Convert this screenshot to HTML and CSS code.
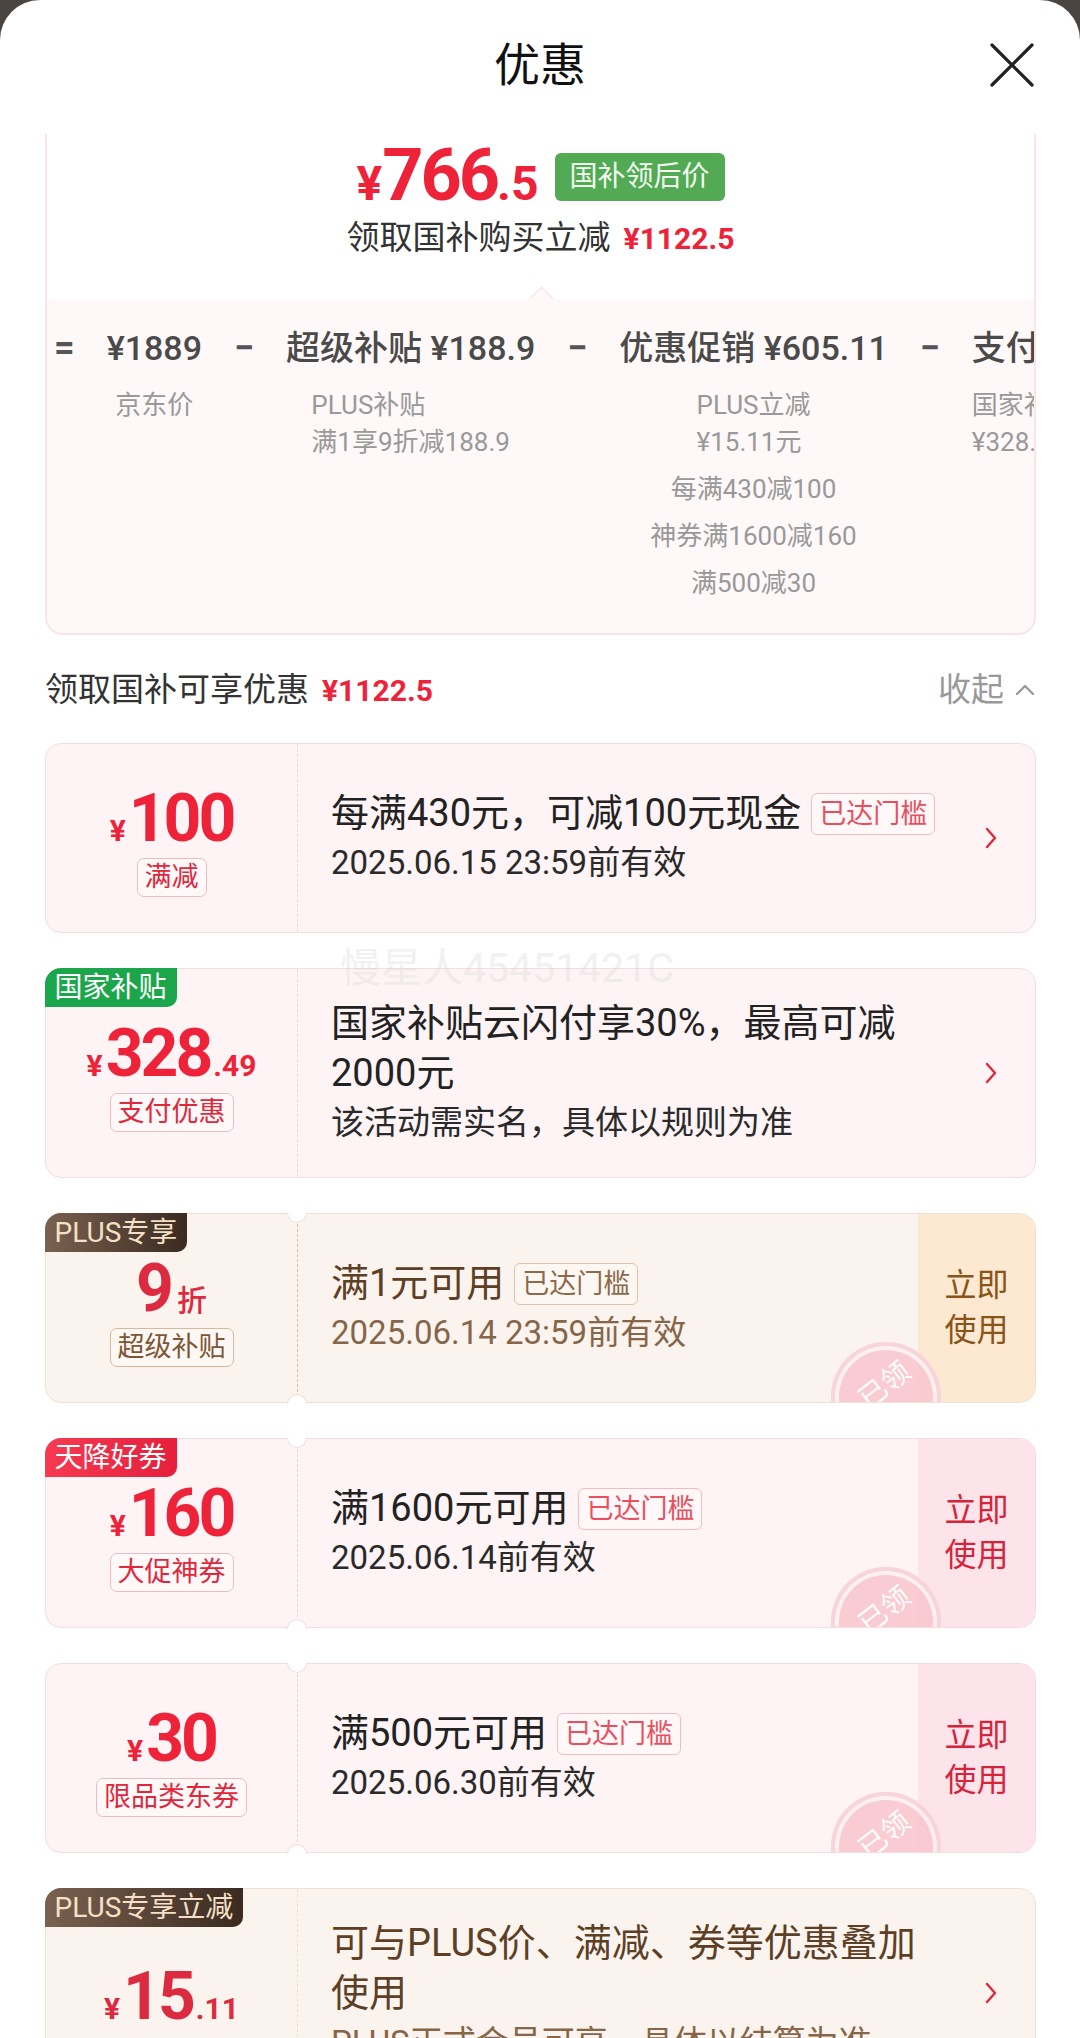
FILE: index.html
```html
<!DOCTYPE html>
<html lang="zh-CN">
<head>
<meta charset="utf-8">
<title>优惠</title>
<link rel="stylesheet" href="styles.css">
</head>
<body>
<div class="sheet">
  <header class="hd">
    <span></span>
    <h1 class="hd-title">优惠</h1>
    <span class="hd-close"><svg width="46" height="46" viewBox="0 0 46 46"><path d="M3 3L43 43M43 3L3 43" stroke="#222" stroke-width="3.2" fill="none" stroke-linecap="round"/></svg></span>
  </header>

  <section class="summary">
    <div class="sum-top">
      <div class="sum-price">
        <span class="pr"><span class="pr-y">¥</span><span class="pr-i">766</span><span class="pr-d">.5</span></span>
        <span class="gtag">国补领后价</span>
      </div>
      <div class="sum-sub">领取国补购买立减<span class="red-b">¥1122.5</span></div>
    </div>
    <div class="sum-bot">
      <span class="arrow"></span>
      <div class="formula">
        <span class="op">=</span>
        <div class="fcol">
          <div class="fval">¥1889</div>
          <div class="fgroup">京东价</div>
        </div>
        <span class="op">−</span>
        <div class="fcol">
          <div class="fval">超级补贴 ¥188.9</div>
          <div class="fgroup">PLUS补贴<br>满1享9折减188.9</div>
        </div>
        <span class="op">−</span>
        <div class="fcol">
          <div class="fval">优惠促销 ¥605.11</div>
          <div class="fgroup">PLUS立减<br>¥15.11元</div>
          <div class="fitem">每满430减100</div>
          <div class="fitem">神券满1600减160</div>
          <div class="fitem">满500减30</div>
        </div>
        <span class="op">−</span>
        <div class="fcol fcol-start">
          <div class="fval">支付优惠 ¥328.49</div>
          <div class="fgroup">国家补贴<br>¥328.49</div>
        </div>
      </div>
    </div>
  </section>

  <div class="sec-hd">
    <div class="sec-title">领取国补可享优惠<span class="red-b">¥1122.5</span></div>
    <div class="sec-fold">收起<svg width="22" height="14" viewBox="0 0 22 14"><path d="M3 11L11 3L19 11" stroke="#9a9a9a" stroke-width="2.4" fill="none" stroke-linecap="round" stroke-linejoin="round"/></svg></div>
  </div>

  <div class="cards">
    <!-- card 1 -->
    <div class="card t-pink">
      <div class="c-left">
        <div class="amt"><span class="amt-y">¥</span><span class="amt-i">100</span></div>
        <span class="ltag">满减</span>
      </div>
      <div class="c-mid">
        <div class="c-title">每满430元，可减100元现金<span class="mtag">已达门槛</span></div>
        <div class="c-date">2025.06.15 23:59前有效</div>
      </div>
      <div class="c-go"><svg width="14" height="24" viewBox="0 0 14 24"><path d="M3 3L11 12L3 21" stroke="#e0283c" stroke-width="2.4" fill="none" stroke-linecap="round" stroke-linejoin="round"/></svg></div>
    </div>

    <!-- card 2 -->
    <div class="card t-pink">
      <span class="ctag ctag-green">国家补贴</span>
      <div class="c-left">
        <div class="amt"><span class="amt-y">¥</span><span class="amt-i">328</span><span class="amt-d">.49</span></div>
        <span class="ltag">支付优惠</span>
      </div>
      <div class="c-mid">
        <div class="c-title">国家补贴云闪付享30%，最高可减2000元</div>
        <div class="c-date">该活动需实名，具体以规则为准</div>
      </div>
      <div class="c-go"><svg width="14" height="24" viewBox="0 0 14 24"><path d="M3 3L11 12L3 21" stroke="#e0283c" stroke-width="2.4" fill="none" stroke-linecap="round" stroke-linejoin="round"/></svg></div>
    </div>

    <!-- card 3 -->
    <div class="card t-beige">
      <span class="ctag ctag-plus">PLUS专享</span>
      <div class="c-left c-dash">
        <div class="amt"><span class="amt-i">9</span><span class="amt-u">折</span></div>
        <span class="ltag">超级补贴</span>
      </div>
      <div class="c-mid">
        <div class="c-title">满1元可用<span class="mtag">已达门槛</span></div>
        <div class="c-date">2025.06.14 23:59前有效</div>
      </div>
      <div class="c-btn">立即<br>使用</div>
      <span class="notch notch-top"></span>
      <span class="notch notch-bot"></span>
      <div class="clip"><div class="stamp"><span>已领</span></div></div>
    </div>

    <!-- card 4 -->
    <div class="card t-coupon">
      <span class="ctag ctag-red">天降好券</span>
      <div class="c-left c-dash">
        <div class="amt"><span class="amt-y">¥</span><span class="amt-i">160</span></div>
        <span class="ltag">大促神券</span>
      </div>
      <div class="c-mid">
        <div class="c-title">满1600元可用<span class="mtag">已达门槛</span></div>
        <div class="c-date">2025.06.14前有效</div>
      </div>
      <div class="c-btn">立即<br>使用</div>
      <span class="notch notch-top"></span>
      <span class="notch notch-bot"></span>
      <div class="clip"><div class="stamp"><span>已领</span></div></div>
    </div>

    <!-- card 5 -->
    <div class="card t-coupon">
      <div class="c-left c-dash">
        <div class="amt"><span class="amt-y">¥</span><span class="amt-i">30</span></div>
        <span class="ltag">限品类东券</span>
      </div>
      <div class="c-mid">
        <div class="c-title">满500元可用<span class="mtag">已达门槛</span></div>
        <div class="c-date">2025.06.30前有效</div>
      </div>
      <div class="c-btn">立即<br>使用</div>
      <span class="notch notch-top"></span>
      <span class="notch notch-bot"></span>
      <div class="clip"><div class="stamp"><span>已领</span></div></div>
    </div>

    <!-- card 6 -->
    <div class="card t-beige t-beige-soft">
      <span class="ctag ctag-plus">PLUS专享立减</span>
      <div class="c-left">
        <div class="amt"><span class="amt-y">¥</span><span class="amt-i">15</span><span class="amt-d">.11</span></div>
      </div>
      <div class="c-mid">
        <div class="c-title">可与PLUS价、满减、券等优惠叠加使用</div>
        <div class="c-date">PLUS正式会员可享，具体以结算为准</div>
      </div>
      <div class="c-go"><svg width="14" height="24" viewBox="0 0 14 24"><path d="M3 3L11 12L3 21" stroke="#e0283c" stroke-width="2.4" fill="none" stroke-linecap="round" stroke-linejoin="round"/></svg></div>
    </div>
  </div>

  <div class="watermark">慢星人45451421C</div>
</div>
</body>
</html>
```

FILE: styles.css
```css
* { box-sizing: border-box; margin: 0; padding: 0; }
html, body { width: 1080px; height: 2038px; overflow: hidden; }
body {
  background: #4a4541;
  font-family: Roboto, "Noto Sans CJK SC", sans-serif;
  color: #222;
}
.sheet {
  position: relative;
  background: #fff;
  border-radius: 40px 40px 0 0;
  height: 2038px;
  overflow: hidden;
}

/* header */
.hd {
  height: 134px;
  display: grid;
  grid-template-columns: 1fr auto 1fr;
  align-items: center;
  padding: 0 45px 4px 45px;
}
.hd-title { font-size: 46px; font-weight: 400; color: #111; line-height: 1; }
.hd-close { justify-self: end; display: flex; }

/* summary card */
.summary {
  margin: 0 44px 0 45px;
  border: 2px solid #fbe3e7;
  border-top: none;
  border-radius: 0 0 18px 18px;
}
.sum-top {
  height: 165px;
  display: flex;
  flex-direction: column;
  align-items: center;
  padding-top: 14px;
}
.sum-price { display: flex; align-items: center; gap: 16px; height: 58px; }
.pr { color: #ee2239; font-weight: 700; font-size: 72px; line-height: 58px; white-space: nowrap; }
.pr-y { font-size: 48px; line-height: 1; }
.pr-i { font-size: 72px; letter-spacing: -3px; }
.pr-d { font-size: 48px; line-height: 1; }
.gtag {
  background: #52aa55;
  color: #f4fff2;
  font-size: 28px;
  line-height: 48px;
  height: 48px;
  padding: 0 15px;
  border-radius: 6px;
}
.sum-sub {
  margin-top: 9px;
  font-size: 33px;
  line-height: 46px;
  color: #333;
  white-space: nowrap;
}
.red-b { color: #ee2239; font-weight: 700; font-size: 30px; margin-left: 13px; line-height: 1; }

.sum-bot {
  position: relative;
  background: #fef8f8;
  padding: 24px 0 31px;
  border-radius: 0 0 16px 16px;
}
.arrow {
  position: absolute;
  left: 50%;
  top: -9px;
  width: 17px;
  height: 17px;
  margin-left: -8px;
  background: #fef8f8;
  border-top: 1.5px solid #fbe0e4;
  border-left: 1.5px solid #fbe0e4;
  transform: rotate(45deg);
}
.formula {
  display: flex;
  align-items: flex-start;
  gap: 32px;
  padding-left: 7px;
  overflow: hidden;
  white-space: nowrap;
}
.op { font-size: 36px; font-weight: 700; line-height: 50px; color: #555; flex-shrink: 0; }
.fcol { display: flex; flex-direction: column; align-items: center; flex-shrink: 0; }
.fcol-start { align-items: flex-start; }
.fval { font-size: 34px; font-weight: 500; line-height: 50px; color: #4a4a4a; }
.fgroup { text-align: left; font-size: 26px; line-height: 37px; color: #999; margin-top: 14px; }
.fitem { font-size: 26px; line-height: 37px; color: #999; margin-top: 10px; }

/* section header */
.sec-hd {
  margin-top: 27px;
  padding: 0 44px 0 45px;
  display: flex;
  justify-content: space-between;
  align-items: center;
  height: 50px;
}
.sec-title { font-size: 33px; color: #333; white-space: nowrap; }
.sec-fold { font-size: 33px; color: #999; display: flex; align-items: center; gap: 10px; }
.sec-fold svg { margin-top: 6px; }

/* cards */
.cards {
  margin: 31px 44px 0 45px;
  display: flex;
  flex-direction: column;
  gap: 35px;
}
.card {
  position: relative;
  display: flex;
  min-height: 190px;
  border: 1.5px solid;
  border-radius: 16px;
}
.c-left {
  width: 252px;
  flex-shrink: 0;
  display: flex;
  flex-direction: column;
  align-items: center;
  justify-content: center;
  padding-top: 8px;
  border-right: 1.5px dashed;
}
.amt { color: #ee2239; font-weight: 700; font-size: 66px; line-height: 64px; white-space: nowrap; }
.amt-y { font-size: 30px; margin-right: 3px; line-height: 1; }
.amt-i { font-size: 66px; letter-spacing: -3px; }
.amt-d { font-size: 30px; margin-left: 3px; line-height: 1; }
.amt-u { font-size: 30px; font-weight: 500; margin-left: 6px; line-height: 1; }
.ltag {
  margin-top: 7px;
  font-size: 27px;
  line-height: 37px;
  padding: 0 7px;
  border: 1px solid;
  border-radius: 7px;
}
.c-mid {
  flex: 1;
  min-width: 0;
  display: flex;
  flex-direction: column;
  justify-content: center;
  padding: 29px 0 29px 33px;
}
.c-title { font-size: 38px; line-height: 50px; }
.c-date { font-size: 33px; line-height: 50px; }
.mtag {
  display: inline-block;
  vertical-align: 3px;
  margin-left: 10px;
  font-size: 27px;
  line-height: 40px;
  padding: 0 7px;
  border: 1px solid;
  border-radius: 6px;
}
.c-go { width: 88px; flex-shrink: 0; display: flex; align-items: center; justify-content: center; }
.c-btn {
  width: 117px;
  flex-shrink: 0;
  display: flex;
  align-items: center;
  justify-content: center;
  text-align: center;
  font-size: 32px;
  line-height: 45px;
  border-radius: 0 14.5px 14.5px 0;
}

/* corner tags */
.ctag {
  position: absolute;
  left: -1.5px;
  top: -1.5px;
  z-index: 2;
  height: 39px;
  line-height: 39px;
  font-size: 28px;
  padding: 0 10px;
  border-radius: 16px 0 10px 0;
  color: #fff;
}
.ctag-green { background: #1ca64b; }
.ctag-red { background: linear-gradient(90deg, #f63a52, #e51f3c); }
.ctag-plus { background: linear-gradient(90deg, #7a6150, #3a2a20); color: #f5e0c7; }

/* notches */
.notch {
  position: absolute;
  left: 241px;
  width: 20px;
  height: 10px;
  background: #fff;
  border: 1.5px solid;
  z-index: 2;
}
.notch-top { top: -1.5px; border-top: none; border-radius: 0 0 10px 10px; }
.notch-bot { bottom: -1.5px; border-bottom: none; border-radius: 10px 10px 0 0; }

/* stamp */
.clip {
  position: absolute;
  inset: 0;
  border-radius: 14.5px;
  overflow: hidden;
  pointer-events: none;
}
.stamp {
  position: absolute;
  left: 785px;
  top: 128px;
  width: 110px;
  height: 110px;
  border-radius: 50%;
  background: #f9c7cf;
  box-shadow: inset 0 0 0 4px #f8d2d8, inset 0 0 0 8px #fdf0f2;
  display: flex;
  align-items: center;
  justify-content: center;
  opacity: 0.9;
}
.stamp span {
  color: #fff;
  font-size: 28px;
  transform: translate(-3px, -14px) rotate(-38deg);
}

/* themes */
.t-pink { background: #fef4f5; border-color: #f4dde0; }
.t-pink .c-left { border-right-color: #efdadd; }
.t-pink .c-title, .t-coupon .c-title { color: #222; }
.t-pink .c-date, .t-coupon .c-date { color: #2a2a2a; }
.t-pink .ltag, .t-coupon .ltag { color: #e0283c; border-color: #ebbdc2; background: #fff8f9; }
.t-pink .mtag, .t-coupon .mtag { color: #e8505f; border-color: #f2bcc3; background: #fff7f8; }

.t-coupon { background: #fef3f5; border-color: #f4dce1; }
.t-coupon .c-left { border-right-color: #efd3d9; }
.t-coupon .c-btn { background: #fde4ea; color: #d5243b; }
.t-coupon .notch { border-color: #f4dce1; }

.t-beige { background: #fbf4ee; border-color: #f0e1d4; }
.t-beige .c-left { border-right-color: #d8bea8; }
.t-beige .amt { color: #dc2a40; }
.t-beige .ltag { color: #7d5636; border-color: #d6b89c; background: #fdf8f3; }
.t-beige .mtag { color: #8c6a4d; border-color: #dcc3aa; background: #fdf7f1; }
.t-beige .c-title { color: #5d3f26; }
.t-beige .c-date { color: #876548; }
.t-beige .c-btn { background: #fde8d1; color: #8a5418; }
.t-beige .notch { border-color: #f0e1d4; }
.t-beige-soft .c-left { border-right-color: #efe0d3; }

.watermark {
  position: absolute;
  left: 340px;
  top: 941px;
  font-size: 41px;
  line-height: 54px;
  color: rgba(215, 215, 215, 0.35);
  white-space: nowrap;
  z-index: 5;
}
```
